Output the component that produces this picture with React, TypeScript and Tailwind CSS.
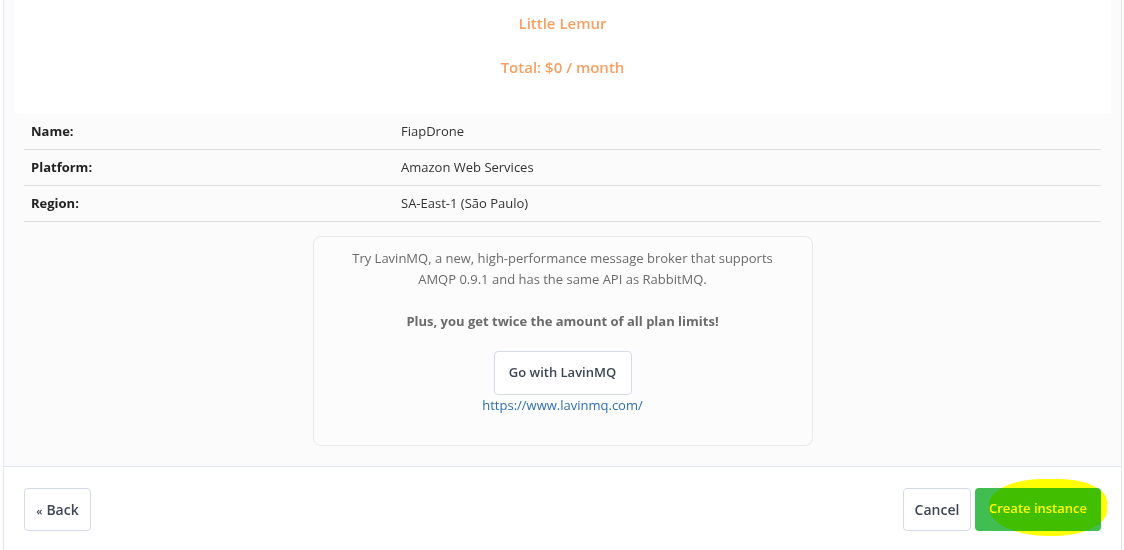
import React from 'react';

// ---------------------------------------------------------------------------------
const rows = [
  { label: 'Name:', value: 'FiapDrone' },
  { label: 'Platform:', value: 'Amazon Web Services' },
  { label: 'Region:', value: 'SA-East-1 (São Paulo)' },
];

// ---------------------------------------------------------------------------------
export default function App() {
  return (
    <div className="h-[550px] w-[1124px] overflow-hidden bg-white pl-[3px] pr-[2px] font-['Open_Sans',sans-serif] text-[13px] text-[#212529]">
      <div className="flex h-full flex-col border-x border-[#e3e5ef] bg-[#fbfbfc]">
        {/* plan summary */}
        <div className="mx-[10px] flex h-[114px] flex-col items-center rounded-bl-md bg-white pt-[12px] text-[15px] font-semibold text-[#f7a064]">
          <p className="leading-[22px]">Little Lemur</p>
          <p className="mt-[22px] leading-[22px]">Total: $0 / month</p>
        </div>

        {/* details */}
        <div className="mx-[20px]">
          {rows.map(r => (
            <div key={r.label} className="flex h-[36px] items-center border-b border-[#dedede] pt-[1px]">
              <span className="w-[377px] pl-[7px] font-bold text-[#222]">{r.label}</span>
              <span className="text-[#333]">{r.value}</span>
            </div>
          ))}
        </div>

        {/* lavinmq promo */}
        <div className="mx-auto mt-[14px] flex h-[210px] w-[500px] flex-col items-center rounded-lg border border-[#e9e9ec] bg-[#fcfcfd] pt-[11px] text-center text-[#6b6b6b]">
          <p className="leading-[21px]">
            Try LavinMQ, a new, high-performance message broker that supports
            <br />
            AMQP 0.9.1 and has the same API as RabbitMQ.
          </p>
          <p className="mt-[21px] font-bold leading-[21px]">Plus, you get twice the amount of all plan limits!</p>
          <button className="mt-[19px] h-[44px] w-[138px] rounded border border-[#d6dbe6] bg-white font-semibold text-[#3d4756]">
            Go with LavinMQ
          </button>
          <a className="leading-[21px] text-[#2f6fb1]" href="#">
            https://www.lavinmq.com/
          </a>
        </div>

        {/* footer */}
        <div className="mt-[20px] flex flex-1 items-center justify-between border-t border-[#e2e6ef] bg-white px-[20px] pt-[1px]">
          <button className="h-[43px] w-[67px] rounded border border-[#d3d9e5] bg-white text-[14px] font-semibold text-[#3d4756]">
            <span className="mr-[4px] text-[11px]">«</span>Back
          </button>
          <div className="flex gap-[4px]">
            <button className="h-[43px] w-[68px] rounded border border-[#d3d9e5] bg-white text-[14px] font-semibold text-[#3d4756]">
              Cancel
            </button>
            <div className="relative">
              <button className="h-[43px] w-[126px] rounded bg-[#41be52] font-semibold text-white">Create instance</button>
              <div className="pointer-events-none absolute left-[14px] top-[-9px] h-[57px] w-[118px] rounded-[45%_40%_45%_50%] bg-[#ffff00] mix-blend-multiply" />
            </div>
          </div>
        </div>
      </div>
    </div>
  );
}
